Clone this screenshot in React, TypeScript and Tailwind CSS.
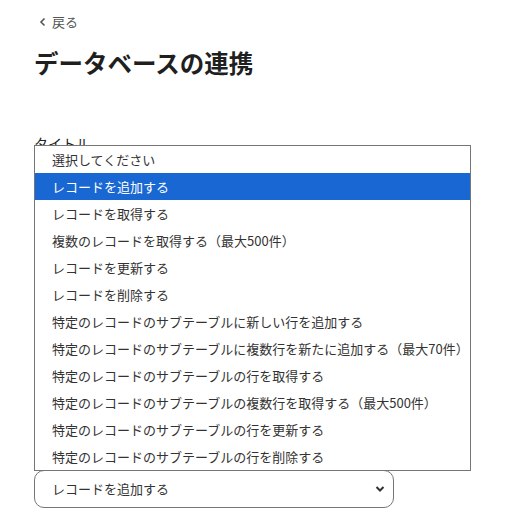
const options = [
  "選択してください",
  "レコードを追加する",
  "レコードを取得する",
  "複数のレコードを取得する（最大500件）",
  "レコードを更新する",
  "レコードを削除する",
  "特定のレコードのサブテーブルに新しい行を追加する",
  "特定のレコードのサブテーブルに複数行を新たに追加する（最大70件）",
  "特定のレコードのサブテーブルの行を取得する",
  "特定のレコードのサブテーブルの複数行を取得する（最大500件）",
  "特定のレコードのサブテーブルの行を更新する",
  "特定のレコードのサブテーブルの行を削除する",
];

const selected = 1;

export default function App() {
  return (
    <div
      className="relative h-[521px] w-[521px] overflow-hidden bg-white pl-[34px] text-[#222]"
      style={{ fontFamily: '"Noto Sans CJK JP", "Noto Sans", sans-serif' }}
    >
      <a className="mt-[12px] flex items-center gap-[5px] pl-[5px] text-[13px] text-[#555]">
        <svg width="8" height="10" viewBox="0 0 8 10" fill="none" stroke="#555" strokeWidth="1.6">
          <path d="M5.5 1.5 2 5l3.5 3.5" />
        </svg>
        <span>戻る</span>
      </a>

      <h1 className="mt-[13px] text-[24.5px] leading-[36px] font-bold text-[#1f1f1f]">
        データベースの連携
      </h1>

      <label className="mt-[52px] block text-[14px] leading-[20px] text-[#222]">タイトル</label>

      <div className="mt-[317px] flex h-[38px] w-[360px] items-center justify-between rounded-[10px] border border-[#767676] pl-[17px] pr-[8px] text-[13px] text-[#333]">
        <span>レコードを追加する</span>
        <svg width="10" height="8" viewBox="0 0 10 8" fill="none" stroke="#333" strokeWidth="2">
          <path d="M1.5 2 5 5.5 8.5 2" />
        </svg>
      </div>

      <ul className="absolute top-[145px] left-[34px] w-[437px] border border-[#767676] bg-white py-0 text-[13px] text-[#333]">
        {options.map((opt, i) => (
          <li
            key={opt}
            className={
              i === selected
                ? "flex h-[27px] items-center bg-[#1967d2] pl-[17px] text-white"
                : "flex h-[27px] items-center pl-[17px]"
            }
          >
            {opt}
          </li>
        ))}
      </ul>
    </div>
  );
}
